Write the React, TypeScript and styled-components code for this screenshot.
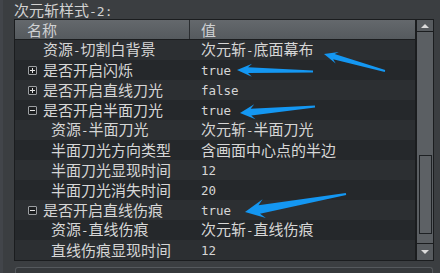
import React from 'react';
import styled, { createGlobalStyle } from 'styled-components';

const GlobalStyle = createGlobalStyle`
    html, body {
        margin: 0;
        padding: 0;
        background: #3b3e41;
        overflow: hidden;
    }
    body {
        width: 440px;
        height: 273px;
        font-family: "Noto Sans CJK SC", "Noto Sans", sans-serif;
        color: #d6d6d6;
    }
`;

const Page = styled.div`
    position: relative;
    width: 440px;
    height: 273px;
    box-sizing: border-box;
    padding-left: 11px;
    border-left: 3px solid #42454a;
    overflow: hidden;
`;

const Title = styled.div`
    height: 19px;
    line-height: 19px;
    font-size: 15px;
    color: #d2d2d2;
    white-space: nowrap;
`;

const Mono = styled.span<{ $size?: number }>`
    font-family: "DejaVu Sans Mono", monospace;
    font-size: ${p => p.$size || 12.5}px;
`;

const Table = styled.div`
    display: flex;
    width: 420px;
    height: 242px;
    box-sizing: border-box;
    border: 1px solid #1b1d1f;
    background: #26292c;
`;

const Main = styled.div`
    width: 400px;
    display: flex;
    flex-direction: column;
    border-right: 2px solid #1b1d1f;
`;

const Header = styled.div`
    display: flex;
    height: 19px;
    border-bottom: 1px solid #1b1d1f;
    background: linear-gradient(#64686c, #555a5e);
    color: #cfd1d3;
    font-size: 15px;
    line-height: 19px;
`;

const HeaderCell = styled.div<{ $width?: number; $pad: number }>`
    ${p => (p.$width ? `width: ${p.$width}px;` : 'flex: 1;')}
    padding-left: ${p => p.$pad}px;
    box-sizing: border-box;
    ${p => (p.$width ? 'border-right: 1px solid #2a2d30;' : '')}
`;

const Row = styled.div<{ $odd: boolean }>`
    display: flex;
    align-items: center;
    height: 20px;
    font-size: 15px;
    line-height: 20px;
    background: ${p => (p.$odd ? '#2c2f32' : '#25282b')};
    white-space: nowrap;
`;

const NameCell = styled.div<{ $indent: number }>`
    width: 175px;
    display: flex;
    align-items: center;
    padding-left: ${p => p.$indent}px;
    box-sizing: border-box;
`;

const Label = styled.span`
    line-height: 20px;
`;

const ValueCell = styled.div`
    flex: 1;
    padding-left: 11px;
    line-height: 20px;
`;

const Toggle = styled.span`
    width: 9px;
    height: 9px;
    box-sizing: border-box;
    border: 1px solid #9c9fa2;
    border-radius: 1px;
    background: #1d1f21;
    margin-right: 6px;
    position: relative;
    flex: none;
    &::before, &::after {
        content: '';
        position: absolute;
        background: #e2e2e2;
    }
    &::before {
        left: 1px;
        right: 1px;
        top: 3px;
        height: 1px;
    }
`;

const PlusToggle = styled(Toggle)`
    &::after {
        top: 1px;
        bottom: 1px;
        left: 3px;
        width: 1px;
    }
`;

const ScrollBar = styled.div`
    width: 16px;
    display: flex;
    flex-direction: column;
    background: #5a5e62;
`;

const ScrollButton = styled.div<{ $height: number }>`
    height: ${p => p.$height}px;
    display: flex;
    align-items: center;
    justify-content: center;
    background: #575b5f;
    flex: none;
`;

const Track = styled.div`
    flex: 1;
    display: flex;
    flex-direction: column;
    border-top: 1px solid #1b1d1f;
    border-bottom: 1px solid #1b1d1f;
    background: #5b5f63;
`;

const TrackSpace = styled.div<{ $height: number }>`
    height: ${p => p.$height}px;
    flex: none;
`;

const Thumb = styled.div`
    flex: 1;
    margin: 0 1px 0 2px;
    border: 1px solid #1e2124;
    background: #5d6165;
`;

const Triangle = styled.span<{ $down?: boolean }>`
    width: 0;
    height: 0;
    border-left: 4px solid transparent;
    border-right: 4px solid transparent;
    ${p => (p.$down ? 'border-top: 4px solid #dcdcdc;' : 'border-bottom: 4px solid #dcdcdc;')}
`;

const Footer = styled.div`
    margin-top: 6px;
    margin-left: 1px;
    width: 418px;
    height: 6px;
    box-sizing: border-box;
    border: 1px solid #55595d;
    border-bottom: none;
    border-radius: 3px 3px 0 0;
    background: #36393c;
`;

const Overlay = styled.svg`
    position: absolute;
    left: 0;
    top: 0;
    pointer-events: none;
`;

type Kind = 'leaf' | 'plus' | 'minus' | 'child';

interface IRow {
    name: string;
    value: string;
    kind: Kind;
}

const rows: IRow[] = [
    { name: '资源-切割白背景', value: '次元斩-底面幕布', kind: 'leaf' },
    { name: '是否开启闪烁', value: 'true', kind: 'plus' },
    { name: '是否开启直线刀光', value: 'false', kind: 'plus' },
    { name: '是否开启半面刀光', value: 'true', kind: 'minus' },
    { name: '资源-半面刀光', value: '次元斩-半面刀光', kind: 'child' },
    { name: '半面刀光方向类型', value: '含画面中心点的半边', kind: 'child' },
    { name: '半面刀光显现时间', value: '12', kind: 'child' },
    { name: '半面刀光消失时间', value: '20', kind: 'child' },
    { name: '是否开启直线伤痕', value: 'true', kind: 'minus' },
    { name: '资源-直线伤痕', value: '次元斩-直线伤痕', kind: 'child' },
    { name: '直线伤痕显现时间', value: '12', kind: 'child' },
];

// latin runs get the narrower mono face, the rest stays CJK
const renderText = (text: string, size?: number) =>
    text.split(/([\x00-\x7f]+)/).filter(Boolean).map((part, i) =>
        /^[\x00-\x7f]+$/.test(part)
            ? <Mono key={i} $size={size}>{part}</Mono>
            : <span key={i}>{part}</span>
    );

const indentFor = (kind: Kind) => (kind === 'leaf' ? 28 : kind === 'child' ? 36 : 13);

type Pt = [number, number];

const arrowPoints = (tip: Pt, tail: Pt, len: number, half: number) => {
    const dx = tail[0] - tip[0];
    const dy = tail[1] - tip[1];
    const d = Math.hypot(dx, dy);
    const ux = dx / d, uy = dy / d;
    const nx = -uy, ny = ux;
    const at = (a: number, b: number): string =>
        `${(tip[0] + ux * a + nx * b).toFixed(1)},${(tip[1] + uy * a + ny * b).toFixed(1)}`;
    const shaft = half * 0.45;
    return [
        at(0, 0),
        at(len * 1.15, half),
        at(len * 0.85, shaft),
        at(d, 0.9),
        at(d, -0.9),
        at(len * 0.85, -shaft),
        at(len * 1.15, -half),
    ].join(' ');
};

const arrows: { tip: Pt; tail: Pt; len: number; half: number }[] = [
    { tip: [321, 54], tail: [382, 71], len: 12, half: 6 },
    { tip: [234, 70], tail: [310, 71.5], len: 13, half: 6.5 },
    { tip: [237, 113], tail: [312, 106.5], len: 13, half: 7.5 },
    { tip: [242, 212], tail: [343, 194], len: 17, half: 9.5 },
];

const App = () => (
    <Page>
        <GlobalStyle />
        <Title>{renderText('次元斩样式-2:', 13)}</Title>
        <Table>
            <Main>
                <Header>
                    <HeaderCell $width={175} $pad={12}>名称</HeaderCell>
                    <HeaderCell $pad={11}>值</HeaderCell>
                </Header>
                {rows.map((r, i) => (
                    <Row key={i} $odd={i % 2 === 0}>
                        <NameCell $indent={indentFor(r.kind)}>
                            {r.kind === 'plus' && <PlusToggle />}
                            {r.kind === 'minus' && <Toggle />}
                            <Label>{renderText(r.name)}</Label>
                        </NameCell>
                        <ValueCell>{renderText(r.value)}</ValueCell>
                    </Row>
                ))}
            </Main>
            <ScrollBar>
                <ScrollButton $height={11}><Triangle /></ScrollButton>
                <Track>
                    <TrackSpace $height={123} />
                    <Thumb />
                    <TrackSpace $height={9} />
                </Track>
                <ScrollButton $height={16}><Triangle $down /></ScrollButton>
            </ScrollBar>
        </Table>
        <Footer />
        <Overlay width={440} height={273} viewBox="0 0 440 273">
            {arrows.map((a, i) => (
                <polygon key={i} points={arrowPoints(a.tip, a.tail, a.len, a.half)} fill="#1497f2" />
            ))}
        </Overlay>
    </Page>
);

export default App;
